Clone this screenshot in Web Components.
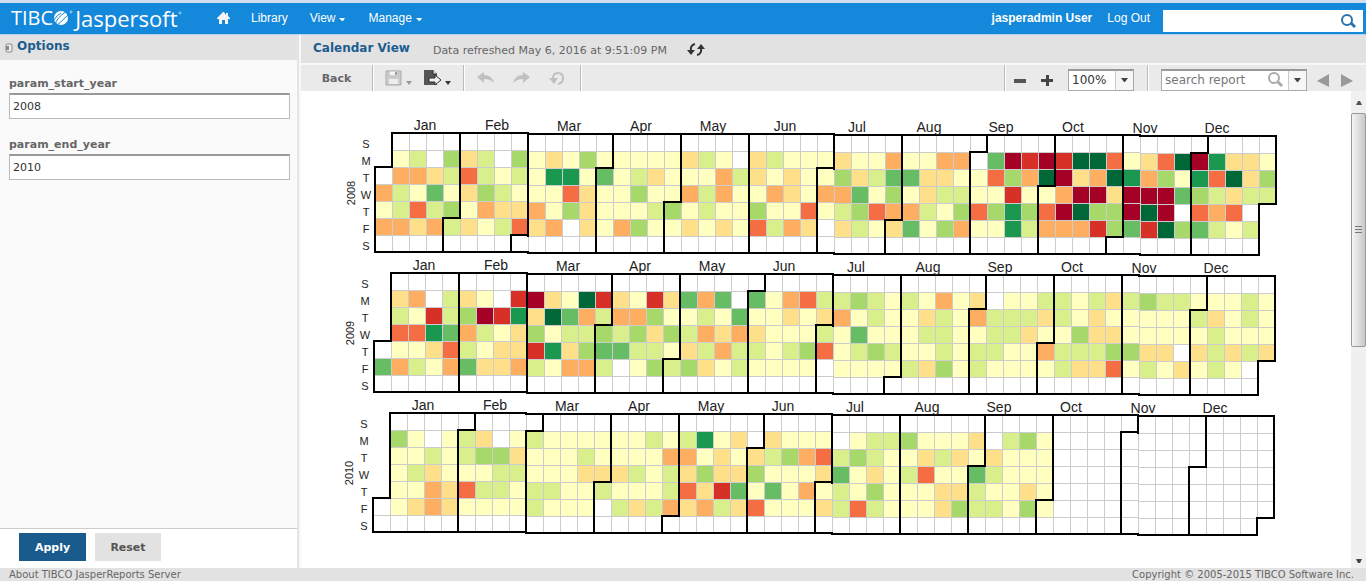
<!DOCTYPE html>
<html lang="en">
<head>
<meta charset="utf-8">
<title>Calendar View</title>
<style>
html, body { height: 100%; margin: 0; }
body { font-family: "DejaVu Sans", Verdana, sans-serif; font-size: 11px; color: #555; background: #e2e2e2; overflow: hidden; }
</style>
</head>
<body>
<report-app></report-app>
<script>
const define = (name, html, setup) => {
  const tpl = document.createElement('template');
  tpl.innerHTML = html;
  customElements.define(name, class extends HTMLElement {
    constructor() {
      super();
      this.attachShadow({ mode: 'open' }).append(tpl.content.cloneNode(true));
    }
    connectedCallback() { if (setup) setup.call(this, this.shadowRoot); }
  });
};

define('app-header', `
<style>
:host { display: flex; align-items: center; box-sizing: border-box; height: 35px; flex: none;
  border-top: 3px solid #cfdfef; border-bottom: 1px solid #b5d3ec; background: #1488da; color: #fff;
  font: 12px "Liberation Sans", Arial, sans-serif; padding: 0 3px 2px 11px; }
.logo { display: flex; align-items: center; font: 20px/24px "Open Sans", sans-serif; width: 206px; color: #fff; text-decoration: none; }
.logo span { font-size: 22px; }
.logo svg { margin: 0 2px 0 0; }
nav { display: flex; align-items: center; flex: 1; }
nav a { display: flex; align-items: center; }
a { color: #fff; text-decoration: none; }
.lib { margin: 0 22px 0 21px; }
.drop { gap: 4px; margin-right: 22px; }
.user { font-weight: bold; margin-right: 15px; }
.out { margin-right: 13px; }
form { display: flex; width: 200px; height: 22px; background: #fff; margin-top: 6px; }
input { flex: 1; min-width: 0; border: 0; outline: 0; background: none; }
button { border: 0; padding: 0; width: 30px; background: none; }
svg { display: block; }
</style>
<a class="logo" href="#">TIBC<svg width="20" height="20" viewBox="0 0 20 20"><circle cx="8" cy="10" r="7" fill="#fff"/><path d="M2 17Q4 9 13 4M3 18Q8 14 15 7M1 12Q4 7 8 5" stroke="#1488da" fill="none"/><circle cx="18" cy="4" r="1" fill="none" stroke="#a8d2f2"/></svg><span>Jaspersoft</span><svg width="5" height="20" viewBox="0 0 5 20"><circle cx="2" cy="5" r="1" fill="none" stroke="#a8d2f2"/></svg></a>
<nav>
<a href="#" aria-label="Home"><svg width="13" height="12" viewBox="0 0 13 12"><path d="M6 0 0 6v1h2v5h3V8h3v4h3V7h2V6L11 4V1H9v2L7 0z" fill="#f4f4f4"/></svg></a>
<a class="lib" href="#">Library</a>
<a class="drop" href="#">View<svg width="7" height="9" viewBox="0 0 7 9"><path d="M0 5h6L4 8H3z" fill="#fff"/></svg></a>
<a class="drop" href="#">Manage<svg width="7" height="9" viewBox="0 0 7 9"><path d="M0 5h6L4 8H3z" fill="#fff"/></svg></a>
</nav>
<a class="user" href="#">jasperadmin User</a><a class="out" href="#">Log Out</a>
<form><input type="text" aria-label="Search"><button type="button" aria-label="Run search"><svg width="30" height="22" viewBox="0 0 30 22"><circle cx="14" cy="10" r="5" fill="none" stroke="#2a74ae" stroke-width="2"/><path d="M18 13l4 4" stroke="#2a74ae" stroke-width="3"/></svg></button></form>`);

define('param-field', `
<style>
:host { display: block; margin-bottom: 19px; }
label { display: block; font-weight: bold; font-size: 11px; line-height: 13px; margin-bottom: 3px; color: #666; }
input { box-sizing: border-box; display: block; width: 100%; height: 26px; padding: 0 3px; font: 11px "DejaVu Sans", sans-serif; color: #333;
  border: 1px solid #bbb; border-top: 2px solid #999; background: #fff; outline: 0; border-radius: 0; }
</style>
<label for="v"></label><input id="v" type="text">`, function (root) {
  root.querySelector('label').textContent = this.getAttribute('name');
  root.querySelector('input').value = this.getAttribute('value');
});

define('options-panel', `
<style>
:host { display: flex; flex-direction: column; width: 298px; flex: none; background: #fafafa; border-right: 1px solid #e6e6e6; box-sizing: border-box; }
header { display: flex; align-items: center; gap: 4px; height: 25px; background: #e2e2e2; padding-left: 5px; flex: none; }
h2 { margin: 0; font-size: 12px; line-height: 20px; color: #1c5d90; padding-bottom: 4px; }
.body { flex: 1; padding: 17px 7px 0 9px; }
footer { display: flex; gap: 9px; height: 35px; padding: 4px 0 0 19px; border-top: 1px solid #ccc; background: #fff; flex: none; }
button { height: 28px; border: 0; padding: 0; width: 66px; font: bold 11px "DejaVu Sans", sans-serif; background: #e2e2e2; color: #555; }
.main { width: 67px; background: #185b8c; color: #fff; }
</style>
<header><svg width="8" height="10" viewBox="0 0 8 10"><rect x="1" y="1" width="6" height="8" rx="1" fill="#eee" stroke="#888"/><path d="M1 3h3v4H1z" fill="#888"/></svg><h2>Options</h2></header>
<div class="body"><param-field name="param_start_year" value="2008"></param-field><param-field name="param_end_year" value="2010"></param-field></div>
<footer><button class="main" type="button">Apply</button><button type="button">Reset</button></footer>`);

define('report-toolbar', `
<style>
:host { display: flex; height: 26px; flex: none; background: #eaeaea; border-top: 2px solid #f8f8f8; }
.g { display: flex; align-items: center; border-right: 1px solid #bbb; box-shadow: 1px 0 #fff; box-sizing: border-box; }
button { border: 0; background: none; padding: 0; margin: 0; font: bold 11px "DejaVu Sans", sans-serif; color: #666; display: flex; align-items: center; justify-content: center; }
.back { width: 71px; }
.file { width: 91px; padding-left: 12px; gap: 12px; }
.undo { width: 117px; padding-left: 13px; gap: 18px; }
.spacer { flex: 1; }
.zoom { width: 143px; padding: 3px 0 0 9px; gap: 15px; }
.find { border: 0; box-shadow: none; padding: 3px 12px 0 13px; width: 218px; }
.box { display: flex; box-sizing: border-box; height: 22px; border: 1px solid #aaa; border-top: 2px solid #999; background: #fff; }
.zoom .box { width: 66px; }
.find .box { width: 146px; margin-right: 10px; }
.find > button + button { margin-left: 12px; }
input { flex: 1; min-width: 0; border: 0; outline: 0; padding: 0 3px; font: 12px "DejaVu Sans", sans-serif; color: #333; background: none; }
input::placeholder { color: #777; opacity: 1; }
.dd { width: 18px; border-left: 1px solid #ccc; background: #f6f6f6; }
</style>
<div class="g"><button class="back" type="button">Back</button></div>
<div class="g file">
<button type="button" aria-label="Save"><svg width="27" height="18" viewBox="0 0 27 18"><path d="M1 2h15v14H1z" fill="#ccc" stroke="#aaa"/><path d="M4 2h9v5H4z" fill="#f4f4f4" stroke="#b5b5b5"/><path d="M10 3h2v3h-2z" fill="#999"/><path d="M4 10h9v5H4z" fill="#eee"/><path d="M21 12h6l-3 4z" fill="#999"/></svg></button>
<button type="button" aria-label="Export"><svg width="27" height="18" viewBox="0 0 27 18"><path d="M0 1h9l4 4v11H0z" fill="#555"/><path d="M9 1v4h4" fill="#ddd" stroke="#333"/><path d="M5 9h6V6l6 5-6 5v-3H5z" fill="#eee" stroke="#333"/><path d="M21 12h6l-3 4z" fill="#333"/></svg></button></div>
<div class="g undo">
<button type="button" aria-label="Undo"><svg width="18" height="14" viewBox="0 0 18 14"><path d="M0 6 7 1v3q8 0 10 8-4-4-10-4v4z" fill="#c0c0c0"/></svg></button>
<button type="button" aria-label="Redo"><svg width="18" height="14" viewBox="0 0 18 14"><path d="M17 6 10 1v3Q2 4 0 12q4-4 10-4v4z" fill="#c0c0c0"/></svg></button>
<button type="button" aria-label="Undo all"><svg width="16" height="15" viewBox="0 0 16 15"><path d="M4 7Q4 2 9 2t5 5-5 6" fill="none" stroke="#c0c0c0" stroke-width="2"/><path d="M0 7h9l-4 6z" fill="#c0c0c0"/></svg></button></div>
<div class="g spacer"></div>
<div class="g zoom">
<button type="button" aria-label="Zoom out"><svg width="12" height="12" viewBox="0 0 12 12"><path d="M0 5h12v4H0z" fill="#555"/></svg></button>
<button type="button" aria-label="Zoom in"><svg width="12" height="12" viewBox="0 0 12 12"><path d="M0 5h12v3H0zM5 1h3v11H5z" fill="#444"/></svg></button>
<div class="box"><input type="text" value="100%" aria-label="Zoom level"><button class="dd" type="button" aria-label="Zoom levels"><svg width="7" height="5" viewBox="0 0 7 5"><path d="M0 0h7L4 4H3z" fill="#444"/></svg></button></div></div>
<div class="g find">
<div class="box"><input type="text" placeholder="search report" aria-label="search report"><button type="button" aria-label="Find"><svg width="22" height="18" viewBox="0 0 22 18"><circle cx="8" cy="7" r="5" fill="none" stroke="#aaa" stroke-width="2"/><path d="M12 11l4 4" stroke="#aaa" stroke-width="3"/></svg></button><button class="dd" type="button" aria-label="Search options"><svg width="7" height="5" viewBox="0 0 7 5"><path d="M0 0h7L4 4H3z" fill="#444"/></svg></button></div>
<button type="button" aria-label="Previous match"><svg width="12" height="14" viewBox="0 0 12 14"><path d="M12 1v13L0 8z" fill="#999"/></svg></button>
<button type="button" aria-label="Next match"><svg width="12" height="14" viewBox="0 0 12 14"><path d="M0 1v13l12-6z" fill="#999"/></svg></button></div>`);

/* One character per week column: 0 is dark red, A is dark green, a dot is no data. Rows run Monday to Friday. */
const CHANGES = {
  2008: ['.56.746.7545755555465.4655545535533.80101AA2542A09445',
         '.33462656599585645553645455746884455273A043A937592A47',
         '36585476555245575536355345338575466551553004000876466',
         '56267534435745556756557552567233657279720A770A0.232..',
         '33436456243.45375545452634.4654857355963331781A78656.'],
  2009: ['.43.645.1045A14514838.85326676565354.5566564676655565',
         '.651670194A836337556585545435655465366646545555564565',
         '.2298365475667674763434555658555665566455744555556555',
         '.5542654419478866546366567256765565665536667744.46464',
         '83653844365336.57674565555.555564756555564425654565..'],
  2010: ['.75.564.56555555656954.4555.56675554.675',
         '.556567745556555533545467326765546454555',
         '.564555665554446564744755548545625586555',
         '.553426656655655562418585356575554465545',
         '.543455556555.64634364255546265554766575']
};
const COLORS = ['#a50026', '#d73027', '#f46d43', '#fdae61', '#fee08b', '#ffffbf', '#d9ef8b', '#a6d96a', '#66bd63', '#1a9850', '#006837'];

define('calendar-year', `
<style>
:host { display: block; height: 140px; }
svg { display: block; overflow: visible; font-family: "Liberation Sans", Arial, sans-serif; fill: #222; }
.cells rect { stroke: #ccc; shape-rendering: crispEdges; }
.edge { stroke: #000; stroke-width: 2; fill: none; stroke-linecap: square; shape-rendering: crispEdges; }
.m { font-size: 14px; text-anchor: middle; }
.d { font-size: 11px; text-anchor: middle; }
</style>
<svg width="950" height="140"><g class="cells"></g><path class="edge"/><g class="text"></g></svg>`, function (root) {
  const year = +this.getAttribute('year'), data = CHANGES[year];
  const size = 17, left = +this.getAttribute('left'), top = 23;
  const drop = c => Math.round(c * 3 / 53);
  const first = new Date(Date.UTC(year, 0, 1)).getUTCDay();
  const month = {};
  let cells = '', edge = '', text = '';
  for (let i = 0, d; (d = new Date(Date.UTC(year, 0, 1 + i))).getUTCFullYear() === year; i++)
    month[Math.floor((i + first) / 7) + ',' + d.getUTCDay()] = d.getUTCMonth();
  for (const key in month) {
    const [c, r] = key.split(',').map(Number), m = month[key];
    const x = left + c * size, y = top + drop(c) + r * size;
    const code = r > 0 && r < 6 ? data[r - 1][c] : '.';
    const fill = !code || code === '.' ? '#fff' : COLORS[parseInt(code, 16)];
    cells += `<rect x="${x}" y="${y}" width="${size}" height="${size}" fill="${fill}"/>`;
    if (month[(c - 1) + ',' + r] !== m) edge += `M${x} ${y}v${size}`;
    if (month[(c + 1) + ',' + r] === undefined) edge += `M${x + size} ${y}v${size}`;
    if (month[c + ',' + (r - 1)] !== m) edge += `M${x} ${y}h${size}`;
    if (month[c + ',' + (r + 1)] === undefined) edge += `M${x} ${y + size}h${size}`;
  }
  'Jan Feb Mar Apr May Jun Jul Aug Sep Oct Nov Dec'.split(' ').forEach((n, i) => {
    text += `<text class="m" x="${left + 50 + i * 72}" y="${20 + Math.round(i / 4)}">${n}</text>`;
  });
  [...'SMTWTFS'].forEach((n, i) => {
    text += `<text class="d" x="${left - 9}" y="${38 + i * size}">${n}</text>`;
  });
  text += `<text class="d" transform="translate(${left - 20} 83) rotate(-90)">${year}</text>`;
  root.querySelector('.cells').innerHTML = cells;
  root.querySelector('.edge').setAttribute('d', edge);
  root.querySelector('.text').innerHTML = text;
});

define('scroll-rail', `
<style>
:host { display: flex; flex-direction: column; width: 15px; flex: none; background: #f0f0f0; align-items: center; }
button { border: 0; padding: 0; background: none; width: 15px; height: 22px; display: flex; justify-content: center; align-items: center; flex: none; }
.down { height: 14px; }
.track { flex: 1; align-self: stretch; }
.thumb { box-sizing: border-box; height: 53%; border: 1px solid #999; border-radius: 2px; background: linear-gradient(to right, #f5f5f5, #c8c8c8); display: flex; align-items: center; justify-content: center; }
</style>
<button type="button" aria-label="Scroll up"><svg width="8" height="5" viewBox="0 0 8 5"><path d="M1 5h6L5 1H3z" fill="#555"/></svg></button>
<div class="track"><div class="thumb"><svg width="7" height="8" viewBox="0 0 7 8"><path d="M0 0h7v1H0zM0 3h7v1H0zM0 6h7v1H0z" fill="#777"/></svg></div></div>
<button class="down" type="button" aria-label="Scroll down"><svg width="8" height="5" viewBox="0 0 8 5"><path d="M1 0h6L5 4H3z" fill="#444"/></svg></button>`);

define('report-view', `
<style>
:host { display: flex; flex-direction: column; flex: 1; min-width: 0; background: #fff; border-left: 2px solid #f8f8f8; margin-left: 1px; }
header { display: flex; align-items: center; height: 28px; flex: none; background: #e2e2e2; padding-left: 12px; }
h1 { margin: 0 23px 2px 0; font-size: 12px; line-height: 20px; color: #1c5d90; }
header span { font-size: 11px; padding-top: 2px; color: #666; }
header button { border: 0; padding: 0; margin-left: 20px; background: none; }
svg { display: block; }
.area { flex: 1; min-height: 0; display: flex; background: #fff; }
.page { flex: 1; min-width: 0; overflow: hidden; padding: 19px 0 0 39px; }
</style>
<header><h1>Calendar View</h1><span>Data refreshed May 6, 2016 at 9:51:09 PM</span><button type="button" aria-label="Refresh"><svg width="18" height="13" viewBox="0 0 18 13"><path d="M8 1Q3 2 4 8M10 12q5-1 4-7" fill="none" stroke="#333" stroke-width="2"/><path d="M0 7h8l-4 5zM10 6h8l-4-5z" fill="#333"/></svg></button></header>
<report-toolbar></report-toolbar>
<div class="area"><div class="page">
<calendar-year year="2008" left="35"></calendar-year>
<calendar-year year="2009" left="34"></calendar-year>
<calendar-year year="2010" left="33"></calendar-year>
</div><scroll-rail></scroll-rail></div>`);

define('report-app', `
<style>
:host { display: flex; flex-direction: column; height: 100vh; overflow: hidden; }
main { flex: 1; min-height: 0; display: flex; }
footer { display: flex; justify-content: space-between; flex: none; background: #e2e2e2; padding: 1px 12px 0 9px; font-size: 10px; line-height: 12px; color: #666; }
footer a { color: inherit; text-decoration: none; }
</style>
<app-header></app-header>
<main><options-panel></options-panel><report-view></report-view></main>
<footer><a href="#">About TIBCO JasperReports Server</a><span>Copyright © 2005-2015 TIBCO Software Inc.</span></footer>`);
</script>
</body>
</html>
